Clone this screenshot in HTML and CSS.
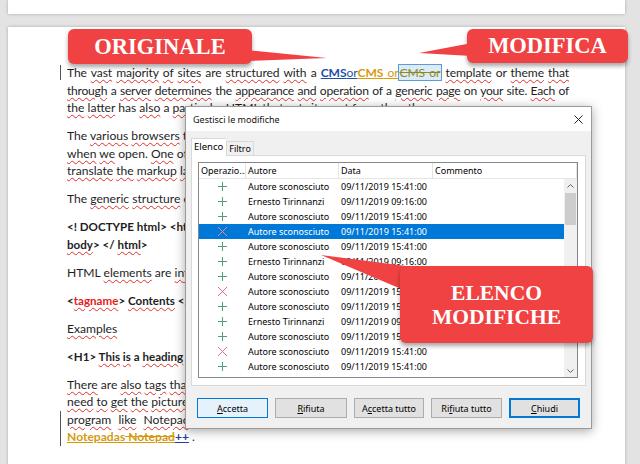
FILE: index.html
```html
<!DOCTYPE html>
<html>
<head>
<meta charset="utf-8">
<link rel="stylesheet" href="styles.css">
</head>
<body>
<div class="desk">
  <div class="page page-top"></div>
  <div class="page page-main">
    <div class="para">
      <div class="ln jl chg">The <span class="w">vast</span> <span class="w">majority</span> <span class="w">of</span> <span class="w">sites</span> are <span class="w">structured</span> <span class="w">with</span> a <span class="cms1"><b>CMS</b>or</span><span class="cms2"><b>CMS</b> or</span><span class="cms3">CMS or</span> <span class="w">template</span> or <span class="w">theme</span> <span class="w">that</span></div>
      <div class="ln jl tight"><span class="w">through</span> a <span class="w">server</span> <span class="w">determines</span> the <span class="w">appearance</span> <span class="w">and</span> <span class="w">operation</span> of a <span class="w">generic</span> <span class="w">page</span> on <span class="w">your</span> site. <span class="w">Each</span> of</div>
      <div class="ln"><span class="w">the</span> <span class="w">latter</span> has <span class="w">also</span> a <span class="w">particular</span> HTML <span class="w">that</span> <span class="w">sets</span> it <span class="w">apart</span> <span class="w">from</span> the <span class="w">others</span>.</div>
    </div>
    <div class="para">
      <div class="ln">The <span class="w">various</span> <span class="w">browsers</span> translate</div>
      <div class="ln"><span class="w">when</span> <span class="w">we</span> open. <span class="w">One</span> of</div>
      <div class="ln"><span class="w">translate</span> <span class="w">the</span> <span class="w">markup</span> <span class="w">language</span></div>
    </div>
    <div class="para">
      <div class="ln">The <span class="w">generic</span> <span class="w">structure</span> of</div>
    </div>
    <div class="para bold">
      <div class="ln">&lt;! DOCTYPE html&gt; &lt;html&gt;</div>
      <div class="ln"><span class="w">body</span>&gt; &lt;/ <span class="w">html</span>&gt;</div>
    </div>
    <div class="para">
      <div class="ln">HTML <span class="w">elements</span> are <span class="w">introduced</span></div>
    </div>
    <div class="para bold">
      <div class="ln">&lt;<span class="w red">tagname</span>&gt; <span class="w">Contents</span> &lt;/</div>
    </div>
    <div class="para">
      <div class="ln"><span class="w">Examples</span></div>
    </div>
    <div class="para bold">
      <div class="ln">&lt;H1&gt; <span class="w">This</span> <span class="w">is</span> a <span class="w">heading</span> &lt;/</div>
    </div>
    <div class="para">
      <div class="ln"><span class="w">There</span> are <span class="w">also</span> <span class="w">tags</span> <span class="w">that</span></div>
      <div class="ln"><span class="w">need</span> <span class="w">to</span> <span class="w">get</span> <span class="w">the</span> <span class="w">picture</span>.</div>
      <div class="ln wide chg2"><span class="w">program</span> <span class="w">like</span> <span class="w">Notepad</span></div>
      <div class="ln chg2"><span class="gold">Notepad<span class="ul">as</span></span><span class="gold strike"> Notepad</span><span class="pp">++</span> .</div>
    </div>
  </div>

  <div class="callout c-orig">ORIGINALE</div>
  <div class="callout c-mod">MODIFICA</div>
  <div class="callout c-list">ELENCO<br>MODIFICHE</div>
  <svg class="pointers" width="640" height="464" viewBox="0 0 640 464">
    <polygon points="246,50 327,58 246,61" fill="#f04242"/>
    <polygon points="472,43 419,53 472,56" fill="#f04242"/>
    <polygon points="321,255 406,266 406,291" fill="#f04242"/>
  </svg>

  <div class="dialog">
    <div class="titlebar">
      <span class="title">Gestisci le modifiche</span>
      <svg class="close" width="9" height="9" viewBox="0 0 9 9"><path d="M0.5 0.5L8.5 8.5M8.5 0.5L0.5 8.5" stroke="#222" stroke-width="1"/></svg>
    </div>
    <div class="dbody">
      <div class="tabs">
        <div class="tab active">Elenco</div>
        <div class="tab">Filtro</div>
      </div>
      <div class="panel">
        <div class="list">
          <div class="lhead">
            <div class="hc">Operazio...</div>
            <div class="hc">Autore</div>
            <div class="hc">Data</div>
            <div class="hc">Commento</div>
          </div>
          <div class="lbody">
            <div class="rows">
              <div class="row"><span class="ic add"></span><span>Autore sconosciuto</span><span>09/11/2019 15:41:00</span><span></span></div>
              <div class="row"><span class="ic add"></span><span>Ernesto Tirinnanzi</span><span>09/11/2019 09:16:00</span><span></span></div>
              <div class="row"><span class="ic add"></span><span>Autore sconosciuto</span><span>09/11/2019 15:41:00</span><span></span></div>
              <div class="row sel"><span class="ic del"></span><span>Autore sconosciuto</span><span>09/11/2019 15:41:00</span><span></span></div>
              <div class="row"><span class="ic add"></span><span>Autore sconosciuto</span><span>09/11/2019 15:41:00</span><span></span></div>
              <div class="row"><span class="ic add"></span><span>Ernesto Tirinnanzi</span><span>09/11/2019 09:16:00</span><span></span></div>
              <div class="row"><span class="ic add"></span><span>Autore sconosciuto</span><span>09/11/2019 15:41:00</span><span></span></div>
              <div class="row"><span class="ic del"></span><span>Autore sconosciuto</span><span>09/11/2019 15:41:00</span><span></span></div>
              <div class="row"><span class="ic add"></span><span>Autore sconosciuto</span><span>09/11/2019 15:41:00</span><span></span></div>
              <div class="row"><span class="ic add"></span><span>Ernesto Tirinnanzi</span><span>09/11/2019 09:16:00</span><span></span></div>
              <div class="row"><span class="ic add"></span><span>Autore sconosciuto</span><span>09/11/2019 15:41:00</span><span></span></div>
              <div class="row"><span class="ic del"></span><span>Autore sconosciuto</span><span>09/11/2019 15:41:00</span><span></span></div>
              <div class="row"><span class="ic add"></span><span>Autore sconosciuto</span><span>09/11/2019 15:41:00</span><span></span></div>
              <div class="row"><span class="ic add"></span><span></span><span></span><span></span></div>
            </div>
            <div class="sbar">
              <div class="arrow"><svg width="7" height="4" viewBox="0 0 7 4"><path d="M0.5 3.5L3.5 0.5L6.5 3.5" stroke="#606060" fill="none"/></svg></div>
              <div class="thumb"></div>
              <div class="track"></div>
              <div class="arrow"><svg width="7" height="4" viewBox="0 0 7 4"><path d="M0.5 0.5L3.5 3.5L6.5 0.5" stroke="#606060" fill="none"/></svg></div>
            </div>
          </div>
        </div>
      </div>
      <div class="buttons">
        <div class="btn focus"><u>A</u>ccetta</div>
        <div class="btn b72"><u>R</u>ifiuta</div>
        <div class="btn b70">A<u>c</u>cetta tutto</div>
        <div class="btn">Ri<u>f</u>iuta tutto</div>
        <div class="btn def"><u>C</u>hiudi</div>
      </div>
    </div>
  </div>
</div>
</body>
</html>
```
FILE: styles.css
```css
html, body {
  margin: 0;
  padding: 0;
}
body {
  width: 640px;
  height: 464px;
  overflow: hidden;
  background: #e3e3e3;
  font-family: "Lato", "Liberation Sans", sans-serif;
}
.desk {
  position: relative;
  width: 640px;
  height: 464px;
  padding-left: 8px;
  box-sizing: border-box;
}
.page {
  background: #fff;
  width: 617px;
  box-sizing: border-box;
  box-shadow: 0 0 3px rgba(0,0,0,0.25);
}
.page-top {
  height: 14px;
}
.page-main {
  margin-top: 13px;
  height: 460px;
  padding: 37px 56px 0 59px;
  font-size: 12.1px;
  line-height: 17.5px;
  color: #1e1e1e;
}
.para {
  margin-bottom: 10.5px;
}
.ln {
  white-space: nowrap;
  position: relative;
}
.jl {
  text-align: justify;
  text-align-last: justify;
  letter-spacing: -0.1px;
}
.jl.tight {
  letter-spacing: -0.25px;
  word-spacing: -0.5px;
}
.bold {
  font-weight: bold;
  font-size: 11.6px;
}
.w {
  text-decoration: underline wavy #e0302a;
  text-decoration-thickness: 1px;
  text-underline-offset: 2px;
}
.red {
  color: #e8201a;
}
.chg::before, .chg2::before {
  content: "";
  position: absolute;
  left: -7px;
  top: 1px;
  width: 1px;
  height: 15px;
  background: #555;
}
.chg2::before {
  top: 0;
  height: 18px;
}
.cms1 {
  color: #1f4fa8;
  text-decoration: underline;
}
.cms2 {
  color: #d99a10;
  text-decoration: underline;
}
.cms3 {
  color: #8a8a20;
  text-decoration: line-through;
  background: #dcebf7;
  outline: 1px solid #5a9bd8;
  padding: 0 1px;
}
.gold {
  color: #d49a12;
  font-weight: bold;
  text-decoration: underline;
}
.strike {
  text-decoration: line-through underline;
}
.pp {
  color: #1f3fa8;
  font-weight: bold;
  text-decoration: underline;
}
.wide {
  word-spacing: 4px;
}

/* callouts */
.callout {
  position: absolute;
  background: #f04242;
  color: #fff;
  font-family: "Liberation Serif", serif;
  font-weight: bold;
  font-size: 22.5px;
  border-radius: 6px;
  box-shadow: 0 3px 4px rgba(0,0,0,0.35);
  display: flex;
  align-items: center;
  justify-content: center;
  text-align: center;
}
.c-orig {
  left: 68px;
  top: 29px;
  width: 184px;
  height: 35px;
  z-index: 2;
}
.c-mod {
  left: 467px;
  top: 29px;
  width: 161px;
  height: 34px;
  z-index: 2;
}
.c-list {
  left: 400px;
  top: 266px;
  width: 193px;
  height: 77px;
  font-size: 21.5px;
  line-height: 24px;
  z-index: 3;
}
.pointers {
  position: absolute;
  left: 0;
  top: 0;
  z-index: 2;
  pointer-events: none;
}

/* dialog */
.dialog {
  position: absolute;
  left: 185px;
  top: 106px;
  width: 407px;
  height: 323px;
  box-sizing: border-box;
  border: 1px solid #9a9a9a;
  background: #f0f0f0;
  box-shadow: 0 2px 10px rgba(0,0,0,0.35);
  font-family: "Noto Sans", "Open Sans", sans-serif;
  font-size: 9px;
  color: #000;
  z-index: 1;
}
.titlebar {
  height: 24px;
  background: #fff;
  display: flex;
  align-items: center;
  justify-content: space-between;
  padding: 0 8px 0 7px;
}
.title {
  color: #111;
}
.dbody {
  padding: 7px 5px 0 5px;
}
.tabs {
  display: flex;
  align-items: flex-end;
  height: 17px;
}
.tab {
  height: 14px;
  line-height: 13px;
  padding: 0 2px;
  border: 1px solid #d9d9d9;
  border-bottom: none;
  box-sizing: border-box;
  background: #f0f0f0;
}
.tab.active {
  height: 18px;
  line-height: 15px;
  background: #fff;
  position: relative;
  margin-bottom: -1px;
  border-right: none;
  padding: 0 3px 0 2px;
  font-size: 9.5px;
}
.panel {
  width: 395px;
  height: 231px;
  box-sizing: border-box;
  border: 1px solid #d9d9d9;
  background: #fff;
  padding: 6px 0 0 6px;
}
.list {
  width: 380px;
  height: 216px;
  box-sizing: border-box;
  border: 1px solid #828790;
  display: flex;
  flex-direction: column;
  overflow: hidden;
}
.lhead {
  display: grid;
  grid-template-columns: 47px 93px 94px 144px;
  height: 16px;
  box-sizing: border-box;
  border-bottom: 1px solid #e5e5e5;
  flex: none;
}
.hc {
  border-right: 1px solid #e5e5e5;
  padding-left: 2px;
  line-height: 15px;
  white-space: nowrap;
  overflow: hidden;
}
.lbody {
  display: flex;
  flex: 1;
  min-height: 0;
}
.rows {
  flex: 1;
  overflow: hidden;
}
.row {
  display: grid;
  grid-template-columns: 47px 93px 94px 1fr;
  height: 15px;
  line-height: 15px;
  white-space: nowrap;
}
.row span {
  padding-left: 2px;
}
.row.sel {
  background: #0078d7;
  color: #fff;
}
.ic {
  display: flex;
  align-items: center;
  justify-content: center;
  padding-left: 0 !important;
}
.ic::before {
  content: "";
  width: 9px;
  height: 9px;
  display: block;
}
.add::before {
  background:
    linear-gradient(#4ea174, #4ea174) center / 1px 9px no-repeat,
    linear-gradient(#4ea174, #4ea174) center / 9px 1px no-repeat;
}
.del::before {
  background:
    linear-gradient(45deg, transparent 45%, #e0708c 45%, #e0708c 55%, transparent 55%),
    linear-gradient(-45deg, transparent 45%, #e0708c 45%, #e0708c 55%, transparent 55%);
}
.sel .del::before {
  background:
    linear-gradient(45deg, transparent 45%, #e889a8 45%, #e889a8 55%, transparent 55%),
    linear-gradient(-45deg, transparent 45%, #e889a8 45%, #e889a8 55%, transparent 55%);
}
.sbar {
  width: 13px;
  flex: none;
  background: #f0f0f0;
  display: flex;
  flex-direction: column;
}
.arrow {
  height: 13px;
  display: flex;
  align-items: center;
  justify-content: center;
  flex: none;
}
.thumb {
  margin: 1px 1px 0 1px;
  height: 32px;
  background: #cdcdcd;
  flex: none;
}
.track {
  flex: 1;
}
.buttons {
  display: flex;
  gap: 7px;
  margin-top: 12px;
  padding-left: 6px;
}
.btn {
  width: 71px;
  height: 20px;
  box-sizing: border-box;
  border: 1px solid #adadad;
  background: #e1e1e1;
  display: flex;
  align-items: center;
  justify-content: center;
}
.btn.b72 { width: 72px; }
.btn.b70 { width: 70px; }
.btn.focus {
  background: #e5f1fb;
  border-color: #0078d7;
}
.btn.def {
  border: 2px solid #0078d7;
}
```
